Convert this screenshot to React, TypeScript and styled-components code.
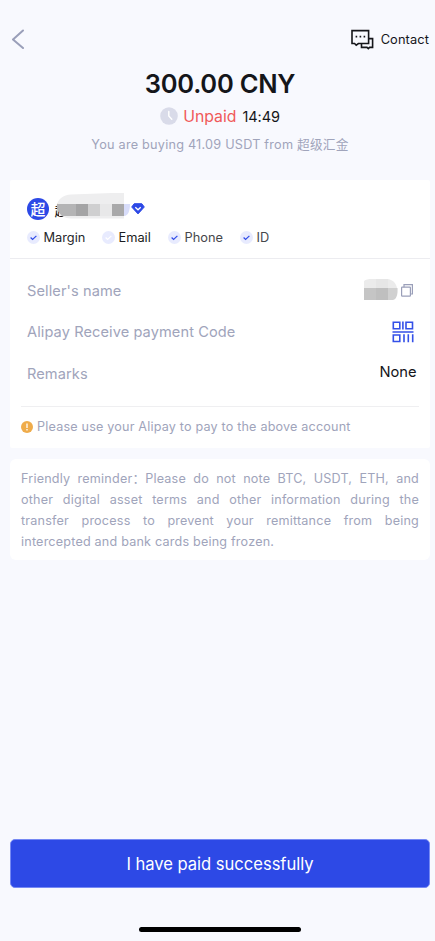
import React from 'react';
import styled, { createGlobalStyle } from 'styled-components';

const GlobalStyle = createGlobalStyle`
  *, *::before, *::after { box-sizing: border-box; }
  html, body { margin: 0; padding: 0; background: #f8f9fe; }
  body { font-family: Inter, "Noto Sans CJK SC", sans-serif; color: #15161a; }
  svg { display: block; flex: none; }
`;

const Screen = styled.main`
  width: 435px;
  height: 941px;
  display: flex;
  flex-direction: column;
  background: #f8f9fe;
  overflow: hidden;
`;

const Header = styled.header`
  height: 30px;
  margin-top: 24px;
  padding: 0 6px 0 11px;
  display: flex;
  align-items: center;
  justify-content: space-between;
`;

const PlainButton = styled.button`
  display: flex;
  align-items: center;
  padding: 0;
  border: 0;
  background: none;
  color: inherit;
  font: inherit;
`;

const ContactButton = styled(PlainButton)`
  gap: 7px;
  padding-top: 1px;
  font-size: 12.8px;
  letter-spacing: 0.12px;
`;

const Summary = styled.section`
  height: 126px;
  display: flex;
  flex-direction: column;
  align-items: center;
  padding: 14px 0 0 5px;
`;

const Amount = styled.h1`
  margin: 0;
  font-size: 25.5px;
  line-height: 32px;
  font-weight: 600;
  letter-spacing: -0.25px;
`;

const StatusRow = styled.div`
  display: flex;
  align-items: center;
  height: 24px;
  margin-top: 4px;
`;

const Status = styled.span`
  margin: 0 6px 0 5px;
  font-size: 15.8px;
  color: #f05a5a;
`;

const Timer = styled.span`
  font-size: 14.5px;
  letter-spacing: -0.1px;
`;

const Caption = styled.p`
  margin: 7px 0 0;
  font-size: 12.7px;
  line-height: 20px;
  letter-spacing: 0.22px;
  color: #a0a4bb;
  white-space: nowrap;
`;

const OrderCard = styled.section`
  width: 420px;
  height: 268px;
  margin-left: 10px;
  background: #fff;
  border-radius: 2px;
`;

const Seller = styled.div`
  height: 79px;
  padding: 15px 17px 0;
  border-bottom: 1px solid #ececf0;
`;

const SellerName = styled.div`
  display: flex;
  align-items: center;
  height: 28px;
`;

const Avatar = styled.span`
  display: flex;
  align-items: center;
  justify-content: center;
  width: 22px;
  height: 22px;
  border-radius: 50%;
  background: #2d49e6;
  color: #fff;
  font: 500 15px/22px "Noto Sans CJK SC", sans-serif;
`;

const BadgeRow = styled.ul`
  display: grid;
  grid-template-columns: 75px 66px 72px auto;
  height: 20px;
  margin: 4px 0 0;
  padding: 0;
  list-style: none;
`;

const Badge = styled.li<{ $color: string }>`
  display: flex;
  align-items: center;
  gap: 3.5px;
  font-size: 12.8px;
  white-space: nowrap;
  color: ${(p) => p.$color};
`;

const Details = styled.dl`
  height: 147px;
  margin: 0;
  padding: 11px 13px 0 17px;
`;

const DetailRow = styled.div`
  display: flex;
  align-items: center;
  justify-content: space-between;
  height: 41.5px;
`;

const Label = styled.dt`
  font-size: 14.6px;
  letter-spacing: 0.09px;
  color: #a0a4bb;
`;

const Value = styled.dd<{ $inset?: number; $lift?: number }>`
  display: flex;
  align-items: center;
  margin: 0;
  padding-right: ${(p) => p.$inset ?? 0}px;
  padding-bottom: ${(p) => p.$lift ?? 0}px;
  font-size: 14.7px;
`;

const Notice = styled.div`
  display: flex;
  align-items: center;
  gap: 4px;
  height: 40px;
  margin: 0 11px;
  border-top: 1px solid #efeff1;
  font-size: 12.6px;
  letter-spacing: 0.19px;
  color: #a0a4bb;
  white-space: nowrap;
`;

const Reminder = styled.p`
  width: 420px;
  height: 101px;
  margin: 11px 0 0 10px;
  padding: 9px 11px 0;
  border-radius: 6px;
  background: #fff;
  color: #a0a4bb;
  font-size: 12.6px;
  line-height: 21px;
  letter-spacing: 0.2px;
`;

const Line = styled.span<{ $last?: boolean }>`
  display: block;
  white-space: nowrap;
  text-align: justify;
  text-align-last: ${(p) => (p.$last ? 'left' : 'justify')};
`;

const Lead = styled.span`
  display: inline-block;
  text-align: left;
  text-align-last: left;
`;

const PayButton = styled.button`
  width: 420px;
  height: 49px;
  margin: auto 0 0 10px;
  flex: none;
  border: 1px solid #7689f4;
  border-radius: 5px;
  background: #2d49e6;
  color: #fff;
  font-family: inherit;
  font-size: 16.6px;
  letter-spacing: -0.03px;
`;

const HomeIndicator = styled.div`
  width: 162px;
  height: 5px;
  flex: none;
  margin: 39px 0 9px 139px;
  border-radius: 3px;
  background: #000;
`;

const BackIcon = () => (
  <svg width="14" height="20" viewBox="0 0 14 20" fill="none" stroke="#9a9fb9" strokeWidth="2" strokeLinecap="round" strokeLinejoin="round">
    <path d="M12 1.5 2 10.5l10 8.5" />
  </svg>
);

const ChatIcon = () => (
  <svg width="23" height="22" viewBox="0 0 23 22" fill="none" stroke="#15161a" strokeWidth="1.6">
    <path d="M1 1.6h16.6v12.9H7.4l-2.2 1.7-1.6-1.7H1z" />
    <path d="M17.6 9.6h4v8.8h-3l-1.3 1.3-1.3-1.3h-5.5v-3.9" />
    <path d="M4.6 7.6h1.6M8.6 7.6h1.6M12.6 7.6h1.6" />
  </svg>
);

const ClockIcon = () => (
  <svg width="18" height="18" viewBox="0 0 18 18" fill="none">
    <circle cx="9" cy="9" r="8.8" fill="#d9dbe9" />
    <path d="M8.8 4.5V9l3 3.3" stroke="#fff" strokeWidth="1.4" strokeLinecap="round" />
  </svg>
);

const CheckIcon = ({ faint = false }: { faint?: boolean }) => (
  <svg width="13" height="13" viewBox="0 0 13 13" fill="none">
    <circle cx="6.5" cy="6.5" r="6.5" fill="#e8ebfe" />
    <path d="m3.6 6.5 2 2 3.8-3.6" stroke={faint ? '#fff' : '#2f4be8'} strokeWidth="1.2" />
  </svg>
);

const MaskGraphic = styled.svg`
  margin-top: -5px;
`;

const MaskedSeller = () => (
  <MaskGraphic width="82" height="28" viewBox="0 0 82 28">
    <text x="5.5" y="23" fontSize="15" fontFamily="Noto Sans CJK SC" fill="#15161a">超</text>
    <path d="M8 12C9 6 14 2 22 1.5L63 0h12v25.5H22c-4 0-7-1-9-2.5H10V12Z" fill="#eeeeef" />
    <path d="M75 11h6c0 7-2 12-6 12Z" fill="#d8ddfa" />
    <path d="M8 11h19v12H13C10 20 7 17 8 11Z" fill="#b4b4b5" />
    <path d="M27 11h12v12H27z" fill="#a4a4a5" />
    <path d="M39 11h12v12H39z" fill="#cfcfd0" />
    <path d="M51 11h12v12H51z" fill="#e8e8e9" />
    <path d="M63 11h12v12H63z" fill="#a9a9aa" />
  </MaskGraphic>
);

const GemIcon = () => (
  <svg width="14" height="12" viewBox="0 0 14 12" fill="none">
    <path d="M3.2.7h7.6L13.3 4 7 10.9.7 4Z" fill="#2d49e6" stroke="#2d49e6" strokeLinejoin="round" />
    <path d="m4.3 4.3 2.7 2.5 2.7-2.5" stroke="#fff" strokeWidth="1.3" />
  </svg>
);

const NameGraphic = styled.svg`
  margin: -3px 3px 0 0;
`;

const MaskedName = () => (
  <NameGraphic width="34" height="21" viewBox="0 0 34 21">
    <path d="M0 2C2 .5 4 0 8 0h16c5 1 8 4 9 9H0Z" fill="#ebebeb" />
    <path d="M12 0h12v9H12z" fill="#e6e6e6" />
    <path d="M0 9h33.5c.5 6-1 12-5 12H0Z" fill="#d0d0d0" />
    <path d="M0 9h12v12H0z" fill="#c5c5c5" />
    <path d="M12 9h12v12H12z" fill="#bfbfbf" />
  </NameGraphic>
);

const CopyIcon = () => (
  <svg width="12" height="13" viewBox="0 0 12 13" fill="none" stroke="#9a9fb9" strokeWidth="1.2">
    <rect x=".6" y="3.2" width="8.8" height="9" rx=".6" />
    <path d="M3 3.2V.7h8.4V10H9.4" />
  </svg>
);

const CodeIcon = () => (
  <svg width="22" height="22" viewBox="0 0 22 22" fill="none" stroke="#3450e8" strokeWidth="1.6">
    <path d="M1.3 1.3h6.5v6.5H1.3zM14 1.3h6.5v6.5H14zM1.3 14h6.5v6.5H1.3z" />
    <path d="M10.9.5v8M.5 11h21M12 13.3v8M16.3 13.3v8M20.7 13.3v8" />
  </svg>
);

const AlertIcon = () => (
  <svg width="12" height="12" viewBox="0 0 12 12" fill="none">
    <circle cx="6" cy="6" r="6" fill="#efac4b" />
    <path d="M6 2.6v4.3M6 8.1v1.4" stroke="#fff" strokeWidth="1.3" />
  </svg>
);

const badges = [
  { name: 'Margin', color: '#26272b' },
  { name: 'Email', color: '#1b1c20', faint: true },
  { name: 'Phone', color: '#46474b' },
  { name: 'ID', color: '#46474b' },
];

export default function App() {
  return (
    <>
      <GlobalStyle />
      <Screen>
        <Header>
          <PlainButton aria-label="Back"><BackIcon /></PlainButton>
          <ContactButton><ChatIcon />Contact</ContactButton>
        </Header>
        <Summary>
          <Amount>300.00 CNY</Amount>
          <StatusRow>
            <ClockIcon />
            <Status>Unpaid</Status>
            <Timer>14:49</Timer>
          </StatusRow>
          <Caption>You are buying 41.09 USDT from 超级汇金</Caption>
        </Summary>
        <OrderCard>
          <Seller>
            <SellerName>
              <Avatar>超</Avatar>
              <MaskedSeller />
              <GemIcon />
            </SellerName>
            <BadgeRow>
              {badges.map((b) => (
                <Badge key={b.name} $color={b.color}>
                  <CheckIcon faint={b.faint} />
                  {b.name}
                </Badge>
              ))}
            </BadgeRow>
          </Seller>
          <Details>
            <DetailRow>
              <Label>Seller's name</Label>
              <Value $inset={4}><MaskedName /><CopyIcon /></Value>
            </DetailRow>
            <DetailRow>
              <Label>Alipay Receive payment Code</Label>
              <Value $inset={3}><CodeIcon /></Value>
            </DetailRow>
            <DetailRow>
              <Label>Remarks</Label>
              <Value $inset={0.5} $lift={3}>None</Value>
            </DetailRow>
          </Details>
          <Notice><AlertIcon />Please use your Alipay to pay to the above account</Notice>
        </OrderCard>
        <Reminder>
          <Line>Friendly <Lead>reminder：</Lead>Please do not note BTC, USDT, ETH, and</Line>
          <Line>other digital asset terms and other information during the</Line>
          <Line>transfer process to prevent your remittance from being</Line>
          <Line $last>intercepted and bank cards being frozen.</Line>
        </Reminder>
        <PayButton>I have paid successfully</PayButton>
        <HomeIndicator />
      </Screen>
    </>
  );
}
